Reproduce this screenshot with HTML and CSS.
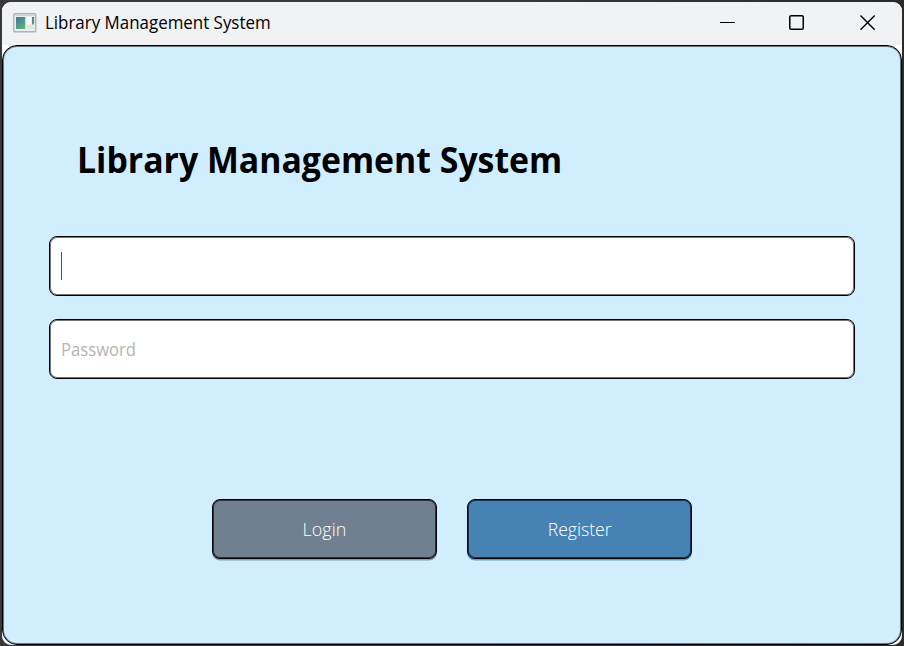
FILE: index.html
```html
<!DOCTYPE html>
<html lang="en">
<head>
<meta charset="utf-8">
<title>Library Management System</title>
<link rel="stylesheet" href="styles.css">
</head>
<body>
<div class="window">
  <header class="titlebar">
    <svg class="app-icon" width="24" height="20" viewBox="0 0 24 20">
      <defs><linearGradient id="g" x1="0" y1="0" x2="0.6" y2="1"><stop offset="0" stop-color="#3e76a8"/><stop offset="1" stop-color="#5cae78"/></linearGradient></defs>
      <rect x=".75" y=".75" width="22" height="18" rx="1" fill="#eceef0" stroke="#aeb4bb" stroke-width="1.4"/>
      <rect x="1.5" y="1.5" width="20.5" height="1.5" fill="#cdd3da"/>
      <rect x="3" y="4" width="9.2" height="12" fill="url(#g)"/>
      <rect x="14" y="4" width="4" height="7" fill="#fff"/>
      <rect x="14" y="12" width="7" height="4" fill="#e2e4e3"/>
      <rect x="19" y="4" width="2.2" height="7.5" fill="url(#g)"/>
    </svg>
    <span class="caption">Library Management System</span>
    <div class="controls">
      <svg width="16" height="16"><path d="M0 7.5H15" stroke="#000"/></svg>
      <svg class="maximize" width="16" height="16"><rect x=".75" y=".75" width="13.5" height="13.5" rx="1.3" fill="none" stroke="#000" stroke-width="1.5"/></svg>
      <svg width="16" height="16"><path d="M.5 .5L14.7 14.7M14.7 .5L.5 14.7" stroke="#000" stroke-width="1.4"/></svg>
    </div>
  </header>
  <main class="panel">
    <h1 class="heading">Library Management System</h1>
    <form class="fields">
      <div class="field"><span class="caret"></span></div>
      <div class="field"><span class="placeholder">Password</span></div>
    </form>
    <div class="actions">
      <button class="btn login" type="button"><span>Login</span></button>
      <button class="btn register" type="button"><span>Register</span></button>
    </div>
  </main>
</div>
</body>
</html>
```
FILE: styles.css
```css
* { box-sizing: border-box; }
body {
  margin: 0;
  width: 904px;
  height: 646px;
  padding: 2px 2px 1px;
  overflow: hidden;
  background: linear-gradient(90deg, #39383b 0 50%, #2c2a2a 100%);
  font-family: "Open Sans", "Noto Sans", sans-serif;
}
.window {
  width: 900px;
  height: 643px;
  border-radius: 9px;
  overflow: hidden;
  background: #fff;
}
.titlebar {
  display: flex;
  align-items: center;
  height: 43px;
  padding: 0 26px 2px 11px;
  background: #f1f2f4;
}
.caption {
  margin: -1px 0 0 8px;
  font-size: 18px;
  line-height: 24px;
  color: #000;
  white-space: nowrap;
  transform: scaleX(0.94);
  transform-origin: left;
}
.controls { display: flex; gap: 54px; margin: 1px 0 0 auto; }
.controls svg { display: block; }
.controls .maximize { margin: 0 1px 0 -1px; }
.panel {
  height: 600px;
  padding: 87px 46px 0;
  border: 1px solid #000;
  border-radius: 15px;
  box-shadow: inset 0 0 0 1px rgba(0, 0, 0, 0.5);
  background: #d0eeff;
}
.heading {
  margin: 0 0 0 28px;
  height: 54px;
  font-size: 36px;
  line-height: 54px;
  font-weight: 700;
  color: #000;
  white-space: nowrap;
  transform: scaleX(0.939);
  transform-origin: left;
}
.fields { display: grid; gap: 23px; margin-top: 49px; }
.field {
  display: flex;
  align-items: center;
  height: 60px;
  padding-left: 11px;
  border: 1px solid #000;
  border-radius: 8px;
  box-shadow: inset 0 0 0 1px rgba(0, 0, 0, 0.55);
  background: #fff;
}
.caret { width: 1px; height: 28px; background: #555; }
.placeholder {
  font-size: 18px;
  color: #b5b5b5;
  transform: scaleX(0.925);
  transform-origin: left;
}
.actions { display: flex; justify-content: center; gap: 30px; margin-top: 120px; }
.btn {
  width: 225px;
  height: 60px;
  padding: 0;
  border: 1px solid #000;
  border-radius: 8px;
  color: #fff;
  font-family: inherit;
  font-size: 18px;
  font-weight: 350;
}
.btn span { display: inline-block; }
.login { background: #708090; box-shadow: inset 0 0 0 1px rgba(0, 0, 0, 0.6), 0 1.5px 0 rgba(112, 128, 144, 0.75); }
.register { background: #4682b4; box-shadow: inset 0 0 0 1px rgba(0, 0, 0, 0.6), 0 1.5px 0 rgba(70, 130, 180, 0.75); }
.register span { transform: scaleX(0.98); }
```
